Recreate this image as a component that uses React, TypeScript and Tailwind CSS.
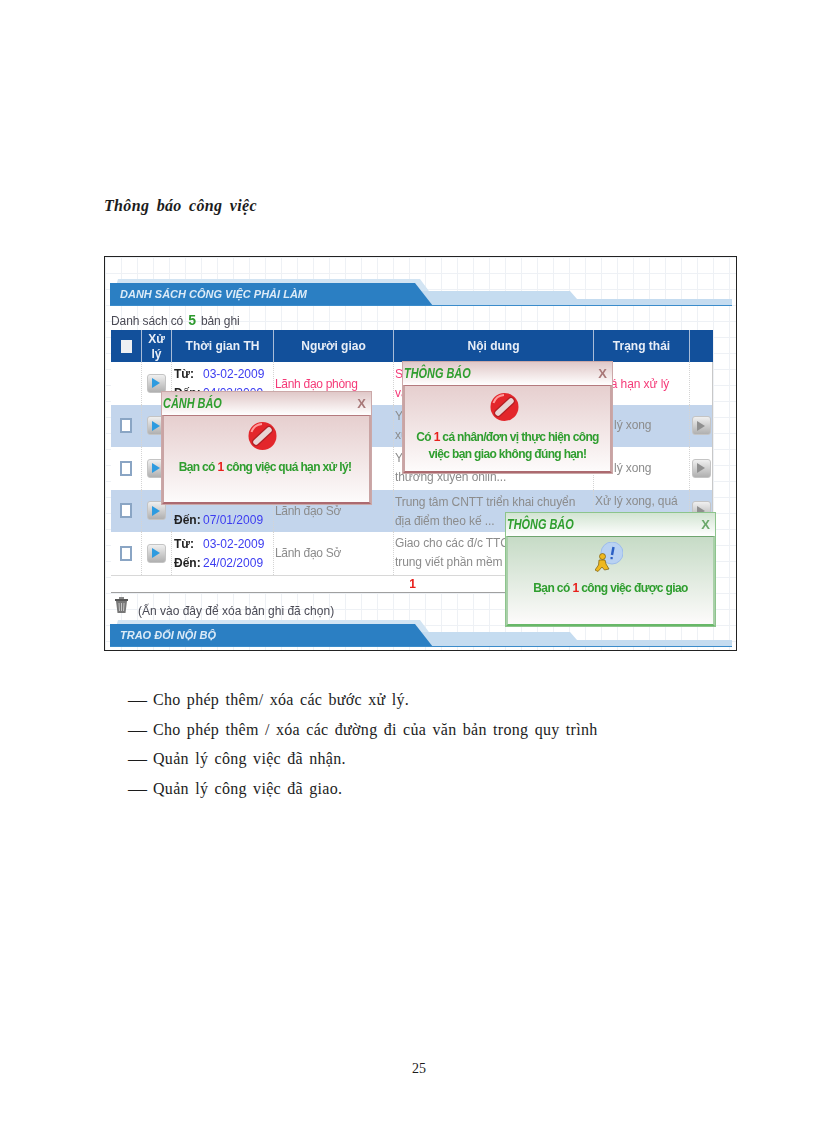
import React from "react";

function Banner({ title }: { title: string }) {
  return (
    <div className="relative ml-[5px] h-[28px] w-[622px]">
      <svg className="absolute inset-0" width="622" height="28" viewBox="0 0 622 28">
        <polygon points="8,0 310,0 330,27 0,27" fill="#d2e4f3" />
        <polygon points="0,12 460,12 467,20 622,20 622,27 0,27" fill="#c5dcf0" />
        <polygon points="0,4 305,4 323,27 0,27" fill="#2b7fc3" />
        <rect x="0" y="26" width="622" height="1" fill="#3b8ccb" />
      </svg>
      <div className="relative pl-[10px] pt-[7px] font-['Liberation_Sans',sans-serif] text-[11px] leading-[17px] font-bold italic text-[#dcebf7]">
        {title}
      </div>
    </div>
  );
}

function Play({ off }: { off?: boolean }) {
  return (
    <div className="-ml-[1px] flex h-[19px] w-[19px] items-center justify-center rounded-[3px] border border-[#c4c4c4] bg-gradient-to-b from-[#f0f0f0] to-[#b0b0b0]">
      <svg width="8" height="10" viewBox="0 0 8 10">
        <polygon points="0,0 8,5 0,10" fill={off ? "#8f8f8f" : "#2d9be0"} />
      </svg>
    </div>
  );
}

function Box() {
  return <div className="h-[15px] w-[12px] border-2 border-[#8aa5c4] bg-white" />;
}

function StopIcon() {
  return (
    <svg width="29" height="30" viewBox="0 0 29 30">
      <circle cx="14.5" cy="15" r="14" fill="#e3262b" />
      <path d="M3.5 11 A12 12 0 0 1 14 3" stroke="#ff9c9c" strokeWidth="2" fill="none" />
      <path d="M8 21 L21 9" stroke="#b32025" strokeWidth="8" strokeLinecap="round" />
      <path d="M8 21 L21 9" stroke="#e8d4d4" strokeWidth="5.5" strokeLinecap="round" />
    </svg>
  );
}

function RunnerIcon() {
  return (
    <svg width="28" height="30" viewBox="0 0 28 30">
      <circle cx="17" cy="11" r="11" fill="#b9d2f2" stroke="#9dbcec" />
      <path d="M18.5 5 L17 13" stroke="#2a5fc4" strokeWidth="2.4" />
      <rect x="15.5" y="15" width="2.2" height="2.2" fill="#2a5fc4" />
      <circle cx="7.5" cy="14.5" r="3" fill="#efb81e" stroke="#7a5c0c" strokeWidth="0.7" />
      <path d="M4 18 H10 L11 22 L14 27 L9.5 28 L7 25 L3 29.5 L0 28 L3.5 23 Z" fill="#efb81e" stroke="#7a5c0c" strokeWidth="0.7" />
    </svg>
  );
}

function Popup({
  title,
  green,
  className,
  children,
}: {
  title: string;
  green?: boolean;
  className: string;
  children: React.ReactNode;
}) {
  return (
    <div
      className={`absolute flex w-[211px] flex-col border font-['Liberation_Sans',sans-serif] ${
        green ? "border-[#8cc48c] bg-[#eef6ee]" : "border-[#cba8a8] bg-[#f3e6e6]"
      } ${className}`}
    >
      <div
        className={`flex h-[23px] shrink-0 items-center justify-between bg-gradient-to-b pl-[1px] pr-[5px] ${
          green ? "from-[#d2e4d2] to-white" : "from-[#e0c8c8] to-white"
        }`}
      >
        <span className="inline-block origin-left scale-x-[0.78] text-[14px] font-bold italic text-[#2f9e2f]">{title}</span>
        <span className={`text-[13px] font-bold ${green ? "text-[#6aa86a]" : "text-[#a87878]"}`}>X</span>
      </div>
      <div
        className={`flex flex-1 flex-col items-center border-x-2 border-t border-b-2 bg-gradient-to-b to-[#fdfbfb] ${
          green
            ? "border-x-[#a9d0a9] border-t-[#6fa56f] border-b-[#68b868] from-[#c6dbc6]"
            : "border-x-[#c9a4a4] border-t-[#b47a7e] border-b-[#ac6a70] from-[#e6cfcf]"
        }`}
      >
        {children}
      </div>
    </div>
  );
}

function Dates({ from, to }: { from: string; to: string }) {
  return (
    <div className="flex flex-col gap-[3px] pl-[2px] text-[12px] leading-[16px]">
      <div className="flex">
        <b className="w-[29px] text-[#222]">Từ:</b>
        <span className="text-[#3c3cf0]">{from}</span>
      </div>
      <div className="flex">
        <b className="w-[29px] text-[#222]">Đến:</b>
        <span className="text-[#3c3cf0]">{to}</span>
      </div>
    </div>
  );
}

const rows = [
  {
    noCheck: true,
    from: "03-02-2009",
    to: "04/02/2009",
    who: "Lãnh đạo phòng",
    text: ["Sửa đổi", "văn bản"],
    state: "Quá hạn xử lý",
    hot: true,
    noAction: true,
  },
  { from: "03-02-2009", to: "05/02/2009", who: "Lãnh đạo Sở", text: ["Yêu cầu", "xử lý"], state: "Xử lý xong" },
  {
    from: "03-02-2009",
    to: "05/02/2009",
    who: "Lãnh đạo Sở",
    text: ["Yêu cầu các đơn vị", "thường xuyên onlin..."],
    state: "Xử lý xong",
  },
  {
    from: "03-02-2009",
    to: "07/01/2009",
    who: "Lãnh đạo Sở",
    text: ["Trung tâm CNTT triển khai chuyển", "địa điểm theo kế ..."],
    state: "Xử lý xong, quá hạn",
  },
  {
    from: "03-02-2009",
    to: "24/02/2009",
    who: "Lãnh đạo Sở",
    text: ["Giao cho các đ/c TTCNTT", "trung viết phần mềm"],
    state: "",
  },
];

export default function App() {
  const th = "border-r border-[#a8bcd8] text-center font-bold text-[#e8eef7] text-[12px] leading-[15px]";
  const td = "flex h-full items-center border-r border-dotted border-[#d4d4d4]";
  return (
    <div className="h-[1123px] w-[816px] bg-white pt-[196px] font-['Liberation_Serif',serif] text-[#1c1c1c]">
      <h1 className="ml-[104px] text-[16px] leading-[20px] font-bold italic tracking-[0.35px] [word-spacing:3px]">
        Thông báo công việc
      </h1>

      <div className="relative ml-[104px] mt-[40px] h-[395px] w-[633px] border border-[#222] bg-white bg-[linear-gradient(#eef1f5_1px,transparent_1px),linear-gradient(90deg,#eef1f5_1px,transparent_1px)] bg-[size:16px_16px] pt-[22px] font-['Liberation_Sans',sans-serif] blur-[0.4px]">
        <Banner title="DANH SÁCH CÔNG VIỆC PHẢI LÀM" />

        <div className="ml-[6px] mt-[5px] mb-[1px] flex h-[17px] items-center gap-[5px] text-[12px] tracking-[-0.1px] text-[#4a4a55]">
          <span>Danh sách có</span>
          <b className="text-[14px] text-[#2e9a2e]">5</b>
          <span>bản ghi</span>
        </div>

        <div className="ml-[6px] w-[602px]">
          <div className="grid h-[32px] grid-cols-[31px_30px_102px_120px_200px_96px_23px] bg-[#12509b]">
            <div className={`${th} flex items-center justify-center`}>
              <div className="h-[13px] w-[11px] bg-[#eef0f2]" />
            </div>
            <div className={`${th} flex items-center pt-[2px]`}>Xử lý</div>
            <div className={`${th} flex items-center justify-center`}>Thời gian TH</div>
            <div className={`${th} flex items-center justify-center`}>Người giao</div>
            <div className={`${th} flex items-center justify-center`}>Nội dung</div>
            <div className={`${th} flex items-center justify-center`}>Trạng thái</div>
            <div />
          </div>

          {rows.map((r, i) => {
            const tone = r.hot ? "text-[#f53a78] pt-[2px]" : "text-[#8c8c8c]";
            return (
              <div
                key={i}
                className={`grid h-[42.5px] grid-cols-[31px_30px_102px_120px_200px_96px_23px] border-r border-[#c8c8c8] text-[12px] ${
                  i % 2 === 1 ? "bg-[#c3d5ec]" : "bg-white"
                }`}
              >
                <div className={`${td} justify-center`}>{r.noCheck ? null : <Box />}</div>
                <div className={`${td} justify-center`}>
                  <Play />
                </div>
                <div className={td}>
                  <Dates from={r.from} to={r.to} />
                </div>
                <div className={`${td} pl-[1px] tracking-[-0.3px] ${tone}`}>{r.who}</div>
                <div className={`${td} pl-[1px] tracking-[-0.1px] ${tone}`}>
                  <div className={`leading-[19px] ${i === 3 ? "pt-[2px]" : ""}`}>
                    {r.text.map((t) => (
                      <div key={t} className="whitespace-nowrap">
                        {t}
                      </div>
                    ))}
                  </div>
                </div>
                <div className={`${td} pl-[1px] tracking-[-0.1px] leading-[19px] ${tone}`}>{r.state}</div>
                <div className="flex h-full items-center justify-center">{r.noAction ? null : <Play off />}</div>
              </div>
            );
          })}

          <div className="flex h-[18px] items-center justify-center border-y border-t-[#d8d8d8] border-b-[#a0a0a0] bg-white pl-[1px] text-[12px] font-bold text-[#e8201c]">
            1
          </div>
        </div>

        <div className="ml-[10px] mt-[4px] flex h-[23px] items-end gap-[10px] text-[12px] text-[#4a4a55]">
          <svg width="13" height="16" viewBox="0 0 13 16" className="self-start">
            <path d="M0 2 H13 V4 H0 Z" fill="#555" />
            <path d="M1 4 L2.5 16 H10.5 L12 4 Z" fill="#777" />
            <path d="M4 0 H9 V2 H4 Z" fill="#888" />
            <path d="M4 6 L4.5 14 M6.5 6 V14 M9 6 L8.5 14" stroke="#c4c4c4" strokeWidth="1" />
          </svg>
          <span className="leading-[17px]">(Ấn vào đây để xóa bản ghi đã chọn)</span>
        </div>

        <Banner title="TRAO ĐỔI NỘI BỘ" />

        <Popup title="CẢNH BÁO" className="left-[56px] top-[134px] h-[114px]">
          <div className="mr-[8px] mt-[5px]">
            <StopIcon />
          </div>
          <p className="mr-[3px] mt-[7px] text-[12px] font-bold tracking-[-0.65px] text-[#2f9e2f]">
            Bạn có <span className="text-[#e8201c]">1</span> công việc quá hạn xử lý!
          </p>
        </Popup>

        <Popup title="THÔNG BÁO" className="left-[297px] top-[104px] h-[113px]">
          <div className="mr-[7px] mt-[6px]">
            <StopIcon />
          </div>
          <p className="mt-[7px] text-center text-[12px] leading-[17px] font-bold tracking-[-0.65px] text-[#2f9e2f]">
            Có <span className="text-[#e8201c]">1</span> cá nhân/đơn vị thực hiện công
            <br />
            việc bạn giao không đúng hạn!
          </p>
        </Popup>

        <Popup green title="THÔNG BÁO" className="left-[400px] top-[255px] h-[115px]">
          <div className="mr-[3px] mt-[5px]">
            <RunnerIcon />
          </div>
          <p className="mt-[7px] text-[12px] font-bold tracking-[-0.6px] text-[#2f9e2f]">
            Bạn có <span className="text-[#e8201c]">1</span> công việc được giao
          </p>
        </Popup>
      </div>

      <ul className="ml-[128px] mt-[34px] text-[16px] leading-[29.6px] tracking-[0.3px] [word-spacing:2px]">
        {[
          "Cho phép thêm/ xóa các bước xử lý.",
          "Cho phép thêm / xóa các đường đi của văn bản trong quy trình",
          "Quản lý công việc đã nhận.",
          "Quản lý công việc đã giao.",
        ].map((t) => (
          <li key={t} className="flex">
            <span className="w-[25px] shrink-0 text-[19px] tracking-normal">—</span>
            <span>{t}</span>
          </li>
        ))}
      </ul>

      <div className="ml-[412px] mt-[258px] text-[14px] leading-[16px]">25</div>
    </div>
  );
}
